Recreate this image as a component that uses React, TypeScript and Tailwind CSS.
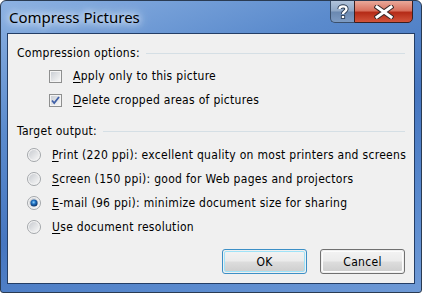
import type { ReactNode } from 'react'

// Win7 Aero-style "Compress Pictures" dialog

function AccessKey({ text }: { text: string }) {
  // first letter is underlined as the keyboard accelerator
  return (
    <span>
      <span className="underline underline-offset-[2px]">{text[0]}</span>
      {text.slice(1)}
    </span>
  )
}

function CheckBox({ checked }: { checked: boolean }) {
  return (
    <svg width="13" height="13" viewBox="0 0 13 13" className="shrink-0">
      <defs>
        <linearGradient id={checked ? 'cbg1' : 'cbg0'} x1="0" y1="0" x2="1" y2="1">
          <stop offset="0" stopColor="#cbcfd5" />
          <stop offset="1" stopColor="#f6f6f6" />
        </linearGradient>
      </defs>
      <rect x="0.5" y="0.5" width="12" height="12" fill="#f4f4f4" stroke="#8e8f8f" />
      <rect x="2" y="2" width="9" height="9" fill={`url(#${checked ? 'cbg1' : 'cbg0'})`} />
      {checked && (
        <path d="M3 6.5 L5.2 9 L10 3" fill="none" stroke="#4060a8" strokeWidth="1.8" />
      )}
    </svg>
  )
}

function Radio({ checked }: { checked: boolean }) {
  const id = checked ? 'rdo1' : 'rdo0'
  return (
    <svg width="14" height="14" viewBox="0 0 14 14" className="shrink-0">
      <defs>
        <linearGradient id={id} x1="0" y1="0" x2="1" y2="1">
          <stop offset="0" stopColor="#c9ccd1" />
          <stop offset="1" stopColor="#f7f7f7" />
        </linearGradient>
        <radialGradient id={id + 'd'} cx="0.45" cy="0.4" r="0.6">
          <stop offset="0" stopColor="#8fd3ff" />
          <stop offset="0.45" stopColor="#1e6fbf" />
          <stop offset="1" stopColor="#0b2f63" />
        </radialGradient>
      </defs>
      <circle cx="7" cy="7" r="6.5" fill="#f4f4f4" stroke="#a3a6aa" />
      <circle cx="7" cy="7" r="5" fill={`url(#${id})`} />
      {checked && <circle cx="7" cy="7" r="3.6" fill={`url(#${id}d)`} />}
    </svg>
  )
}

function GroupHeader({ label }: { label: string }) {
  return (
    <div className="flex items-center h-[16px] pl-[9px] pr-[9px]">
      <span>{label}</span>
      <div className="flex-1 ml-[6px] h-px bg-[#d5dfe5]" />
    </div>
  )
}

function Row({ children }: { children: ReactNode }) {
  return <div className="flex items-center h-[24px]">{children}</div>
}

function Button({ label, isDefault }: { label: string; isDefault?: boolean }) {
  return (
    <div
      className={
        isDefault
          ? 'w-[85px] h-[25px] rounded-[3px] border border-[#3c8fc6] p-px'
          : 'w-[85px] h-[25px] rounded-[3px] border border-[#707070] p-px'
      }
    >
      <div
        className={
          isDefault
            ? 'h-full rounded-[2px] border border-[#9fe3f8] bg-[linear-gradient(#f2f2f2_0%,#ebebeb_48%,#dddddd_52%,#cfcfcf_100%)] flex items-center justify-center'
            : 'h-full rounded-[2px] border border-[#fcfcfc] bg-[linear-gradient(#f2f2f2_0%,#ebebeb_48%,#dddddd_52%,#cfcfcf_100%)] flex items-center justify-center'
        }
      >
        {label}
      </div>
    </div>
  )
}

function CaptionButtons() {
  return (
    <div className="flex h-[23px] -mt-px">
      <div className="w-[24px] h-full border border-[#3a4f6b] border-r-0 rounded-bl-[5px] bg-[linear-gradient(#b1c3da_0%,#8ea7c6_48%,#6a88b0_52%,#7d9bc3_100%)] flex items-center justify-center">
        <svg width="14" height="15" viewBox="0 0 14 15">
          <path d="M3.5 5 C3.5 1.5 10.5 1.5 10.5 5 C10.5 7.5 7 7.5 7 10" fill="none" stroke="#2a3a50" strokeWidth="4.2" />
          <rect x="4.9" y="11.2" width="4.2" height="3.6" fill="#2a3a50" />
          <path d="M3.5 5 C3.5 1.5 10.5 1.5 10.5 5 C10.5 7.5 7 7.5 7 10" fill="none" stroke="#ffffff" strokeWidth="2.4" />
          <rect x="5.8" y="12" width="2.4" height="2" fill="#ffffff" />
        </svg>
      </div>
      <div className="w-[59px] h-full border border-[#3a1f1f] rounded-br-[5px] bg-[linear-gradient(#e9a99a_0%,#d9725f_45%,#b52b17_55%,#d2543b_100%)] flex items-center justify-center">
        <svg width="20" height="14" viewBox="0 0 20 14">
          <path d="M3 2 L17 12 M17 2 L3 12" stroke="#3b2a2a" strokeWidth="5" strokeLinecap="square" />
          <path d="M3 2 L17 12 M17 2 L3 12" stroke="#ffffff" strokeWidth="3" strokeLinecap="square" />
        </svg>
      </div>
    </div>
  )
}

export default function App() {
  return (
    <div className="w-[422px] h-[293px] flex flex-col rounded-t-[6px] rounded-b-[3px] border border-[#2a3b52] bg-[linear-gradient(160deg,#8db2e2_0%,#5b8bcd_30%,#4676c0_55%,#5a8ace_80%,#6f9ad6_100%)] overflow-hidden">
      {/* Title bar */}
      <div className="flex items-start h-[32px] shrink-0">
        <div className="pl-[8px] pt-[6px] font-['Noto_Sans','Open_Sans',sans-serif] text-[15px] leading-[20px] text-black [text-shadow:0_0_6px_#e8f1fb,0_0_10px_#dfeaf7,0_0_14px_#d6e4f5]">
          Compress Pictures
        </div>
        <div className="ml-auto mr-[8px]">
          <CaptionButtons />
        </div>
      </div>

      {/* Client area */}
      <div className="flex-1 mx-[6px] mb-[8px] border border-[#243e66] bg-[#f0f0f0] font-['DejaVu_Sans_Condensed','DejaVu_Sans',sans-serif] text-[12px] tracking-[0.3px] text-black flex flex-col">
        <div className="mt-[11px]">
          <GroupHeader label="Compression options:" />
        </div>
        <div className="mt-[3px] pl-[41px]">
          <Row>
            <CheckBox checked={false} />
            <span className="ml-[11px]"><AccessKey text="Apply only to this picture" /></span>
          </Row>
          <Row>
            <CheckBox checked />
            <span className="ml-[11px]"><AccessKey text="Delete cropped areas of pictures" /></span>
          </Row>
        </div>
        <div className="mt-[11px]">
          <GroupHeader label="Target output:" />
        </div>
        <div className="mt-[4px] pl-[19px]">
          <Row>
            <Radio checked={false} />
            <span className="ml-[11px]"><AccessKey text="Print (220 ppi): excellent quality on most printers and screens" /></span>
          </Row>
          <Row>
            <Radio checked={false} />
            <span className="ml-[11px]"><AccessKey text="Screen (150 ppi): good for Web pages and projectors" /></span>
          </Row>
          <Row>
            <Radio checked />
            <span className="ml-[11px]"><AccessKey text="E-mail (96 ppi): minimize document size for sharing" /></span>
          </Row>
          <Row>
            <Radio checked={false} />
            <span className="ml-[11px]"><AccessKey text="Use document resolution" /></span>
          </Row>
        </div>
        <div className="mt-[10px] flex justify-end gap-[13px] pr-[9px]">
          <Button label="OK" isDefault />
          <Button label="Cancel" />
        </div>
      </div>
    </div>
  )
}
